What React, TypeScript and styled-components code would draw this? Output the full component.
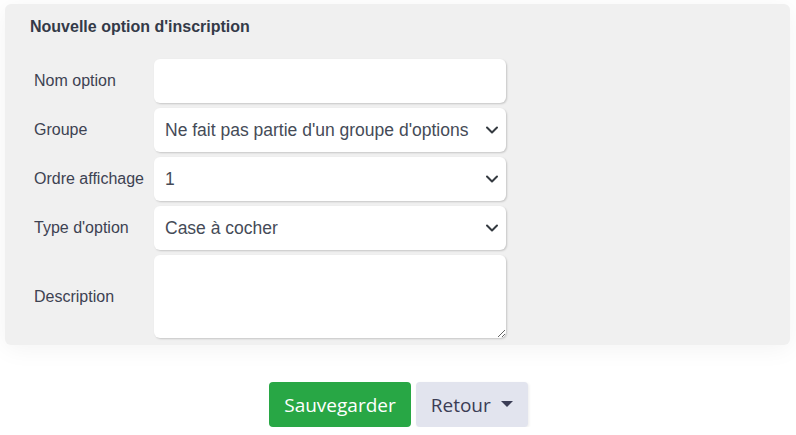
import React from 'react';
import styled, { createGlobalStyle } from 'styled-components';

const GlobalStyle = createGlobalStyle`
  html, body {
    margin: 0;
    padding: 0;
    background: #ffffff;
    font-family: 'Liberation Sans', Arial, sans-serif;
  }
`;

const Page = styled.div`
  padding: 4px 6px 0 5px;
`;

const Card = styled.section`
  background: #f0f0f0;
  border-radius: 6px;
  padding: 13px 25px 7px 25px;
  box-shadow: 0 4px 24px rgba(0, 0, 0, 0.05);
`;

const Title = styled.h2`
  margin: 0 0 22px 0;
  font-size: 16px;
  line-height: 20px;
  font-weight: bold;
  color: #343a48;
`;

const Form = styled.div`
  display: grid;
  grid-template-columns: 124px 352px;
  row-gap: 5px;
  align-items: center;
`;

const Label = styled.label`
  padding-left: 4px;
  font-size: 16px;
  color: #3d4252;
  white-space: nowrap;
`;

const fieldBase = `
  box-sizing: border-box;
  width: 352px;
  border: none;
  border-radius: 6px;
  background: #ffffff;
  box-shadow: 1px 1px 2px rgba(0, 0, 0, 0.18);
  font-family: 'Liberation Sans', Arial, sans-serif;
  font-size: 17.5px;
  color: #454b57;
  outline: none;
`;

const TextInput = styled.input`
  ${fieldBase}
  height: 44px;
  padding: 0 12px;
`;

const SelectWrap = styled.div`
  position: relative;
  width: 352px;
  height: 44px;
`;

const Select = styled.select`
  ${fieldBase}
  height: 44px;
  padding: 0 30px 0 11px;
  appearance: none;
  -webkit-appearance: none;
`;

const Chevron = styled.svg`
  position: absolute;
  right: 7px;
  top: 50%;
  margin-top: -5px;
  pointer-events: none;
`;

const TextArea = styled.textarea`
  ${fieldBase}
  height: 83px;
  padding: 8px 12px;
  resize: both;
  display: block;
`;

const Actions = styled.div`
  display: flex;
  justify-content: center;
  gap: 5px;
  margin-top: 37px;
  padding-left: 2px;
`;

const Button = styled.button<{ $variant: 'primary' | 'light' }>`
  box-sizing: border-box;
  height: 45px;
  border: none;
  border-radius: 4px;
  font-family: 'Open Sans', 'Noto Sans', sans-serif;
  font-size: 19px;
  padding: 0 15px;
  display: flex;
  align-items: center;
  gap: 10px;
  cursor: pointer;
  background: ${({ $variant }) => ($variant === 'primary' ? '#28a745' : '#e2e4ee')};
  color: ${({ $variant }) => ($variant === 'primary' ? '#ffffff' : '#3b3d55')};
  box-shadow: ${({ $variant }) =>
    $variant === 'primary' ? 'none' : '1px 1px 3px rgba(0, 0, 0, 0.08)'};
`;

const Caret = styled.span`
  width: 0;
  height: 0;
  border-left: 6px solid transparent;
  border-right: 6px solid transparent;
  border-top: 6px solid #3b3d55;
  margin-top: -2px;
`;

const ChevronIcon = () => (
  <Chevron width="14" height="10" viewBox="0 0 14 10">
    <path d="M2 2.5 L7 7.5 L12 2.5" fill="none" stroke="#343a40" strokeWidth="2" strokeLinecap="round" strokeLinejoin="round" />
  </Chevron>
);

type SelectFieldProps = {
  options: string[];
  value: string;
};

const SelectField: React.FC<SelectFieldProps> = ({ options, value }) => (
  <SelectWrap>
    <Select defaultValue={value}>
      {options.map((o) => (
        <option key={o} value={o}>
          {o}
        </option>
      ))}
    </Select>
    <ChevronIcon />
  </SelectWrap>
);

export default function App() {
  return (
    <>
      <GlobalStyle />
      <Page>
        <Card>
          <Title>Nouvelle option d'inscription</Title>
          <Form>
            <Label>Nom option</Label>
            <TextInput type="text" />

            <Label>Groupe</Label>
            <SelectField
              value="Ne fait pas partie d'un groupe d'options"
              options={["Ne fait pas partie d'un groupe d'options"]}
            />

            <Label>Ordre affichage</Label>
            <SelectField value="1" options={['1', '2', '3']} />

            <Label>Type d'option</Label>
            <SelectField value="Case à cocher" options={['Case à cocher', 'Liste', 'Texte']} />

            <Label>Description</Label>
            <TextArea />
          </Form>
        </Card>
        <Actions>
          <Button $variant="primary">Sauvegarder</Button>
          <Button $variant="light">
            Retour
            <Caret />
          </Button>
        </Actions>
      </Page>
    </>
  );
}
